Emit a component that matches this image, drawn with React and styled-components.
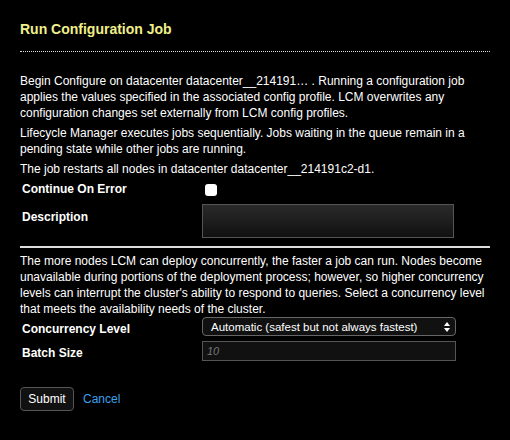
import React from 'react';
import styled, { createGlobalStyle } from 'styled-components';

const Global = createGlobalStyle`
  body {
    margin: 0;
    background: #000;
    color: #fff;
    font-family: "Liberation Sans", Arial, sans-serif;
  }
`;

function App() {
  return (
    <>
      <Global />
      <Panel>
        <Title>Run Configuration Job</Title>
        <DottedRule />
        <Text>
          Begin Configure on datacenter datacenter__214191… . Running a configuration job
          applies the values specified in the associated config profile. LCM overwrites any
          configuration changes set externally from LCM config profiles.
        </Text>
        <Text>
          Lifecycle Manager executes jobs sequentially. Jobs waiting in the queue remain in a
          pending state while other jobs are running.
        </Text>
        <Text>The job restarts all nodes in datacenter datacenter__214191c2-d1.</Text>
        <Row $gap={12}>
          <Label>Continue On Error</Label>
          <Check />
        </Row>
        <Row $gap={8}>
          <Label>Description</Label>
          <Area />
        </Row>
        <SolidRule />
        <Text>
          The more nodes LCM can deploy concurrently, the faster a job can run. Nodes become
          unavailable during portions of the deployment process; however, so higher concurrency
          levels can interrupt the cluster's ability to respond to queries. Select a concurrency level
          that meets the availability needs of the cluster.
        </Text>
        <Row $gap={8}>
          <Label>Concurrency Level</Label>
          <Select>
            <span>Automatic (safest but not always fastest)</span>
            <Arrows>
              <svg width="6" height="10" viewBox="0 0 6 10">
                <path d="M0 4 L3 0 L6 4 Z M0 6 L3 10 L6 6 Z" fill="#fff" />
              </svg>
            </Arrows>
          </Select>
        </Row>
        <Row $gap={0}>
          <Label>Batch Size</Label>
          <Input placeholder="10" />
        </Row>
        <Actions>
          <Button>Submit</Button>
          <Link>Cancel</Link>
        </Actions>
      </Panel>
    </>
  );
}

const Panel = styled.div`
  width: 470px;
  padding: 20px 20px 0;
`;

const Title = styled.div`
  color: #f0f08a;
  font-weight: bold;
  font-size: 14px;
  height: 18px;
  padding-top: 1px;
`;

const DottedRule = styled.div`
  margin: 12px 0 21px;
  border-top: 1px dotted #ddd;
`;

const SolidRule = styled.div`
  margin: 4px 0 5px;
  border-top: 2px solid #ddd;
`;

const Text = styled.p`
  margin: 0 0 4px;
  font-size: 12px;
  line-height: 16px;
`;

const Row = styled.div`
  display: flex;
  align-items: flex-start;
  margin-bottom: ${(p) => p.$gap}px;
`;

const Label = styled.div`
  width: 180px;
  font-size: 12px;
  font-weight: bold;
  padding-left: 2px;
  line-height: 16px;
`;

const Check = styled.div`
  width: 12px;
  height: 12px;
  margin: 3px 0 0 3px;
  border-radius: 3px;
  background: #fff;
`;

const Area = styled.div`
  width: 250px;
  height: 32px;
  margin-top: -5px;
  border: 1px solid #555;
  background: linear-gradient(#2a2a2a, #111);
`;

const Select = styled.div`
  width: 239px;
  height: 17px;
  margin-top: -4px;
  padding: 0 5px 0 8px;
  display: flex;
  align-items: center;
  justify-content: space-between;
  border: 1px solid #666;
  border-radius: 4px;
  background: #111;
  color: #fff;
  font-size: 11.5px;
`;

const Arrows = styled.span`
  display: flex;
`;

const Input = styled.input`
  width: 244px;
  height: 18px;
  margin: -4px 0 0 0;
  padding: 0 4px;
  border: 1px solid #555;
  background: #111;
  color: #fff;
  font-family: inherit;
  font-size: 11px;
  &::placeholder {
    color: #777;
    font-style: italic;
  }
`;

const Actions = styled.div`
  display: flex;
  align-items: center;
  gap: 9px;
  margin-top: 26px;
`;

const Button = styled.button`
  width: 54px;
  height: 24px;
  border: 1px solid #555;
  border-radius: 4px;
  background: #111;
  color: #fff;
  font-family: inherit;
  font-size: 12px;
`;

const Link = styled.span`
  color: #3aa0f0;
  font-size: 12px;
`;

export default App;
